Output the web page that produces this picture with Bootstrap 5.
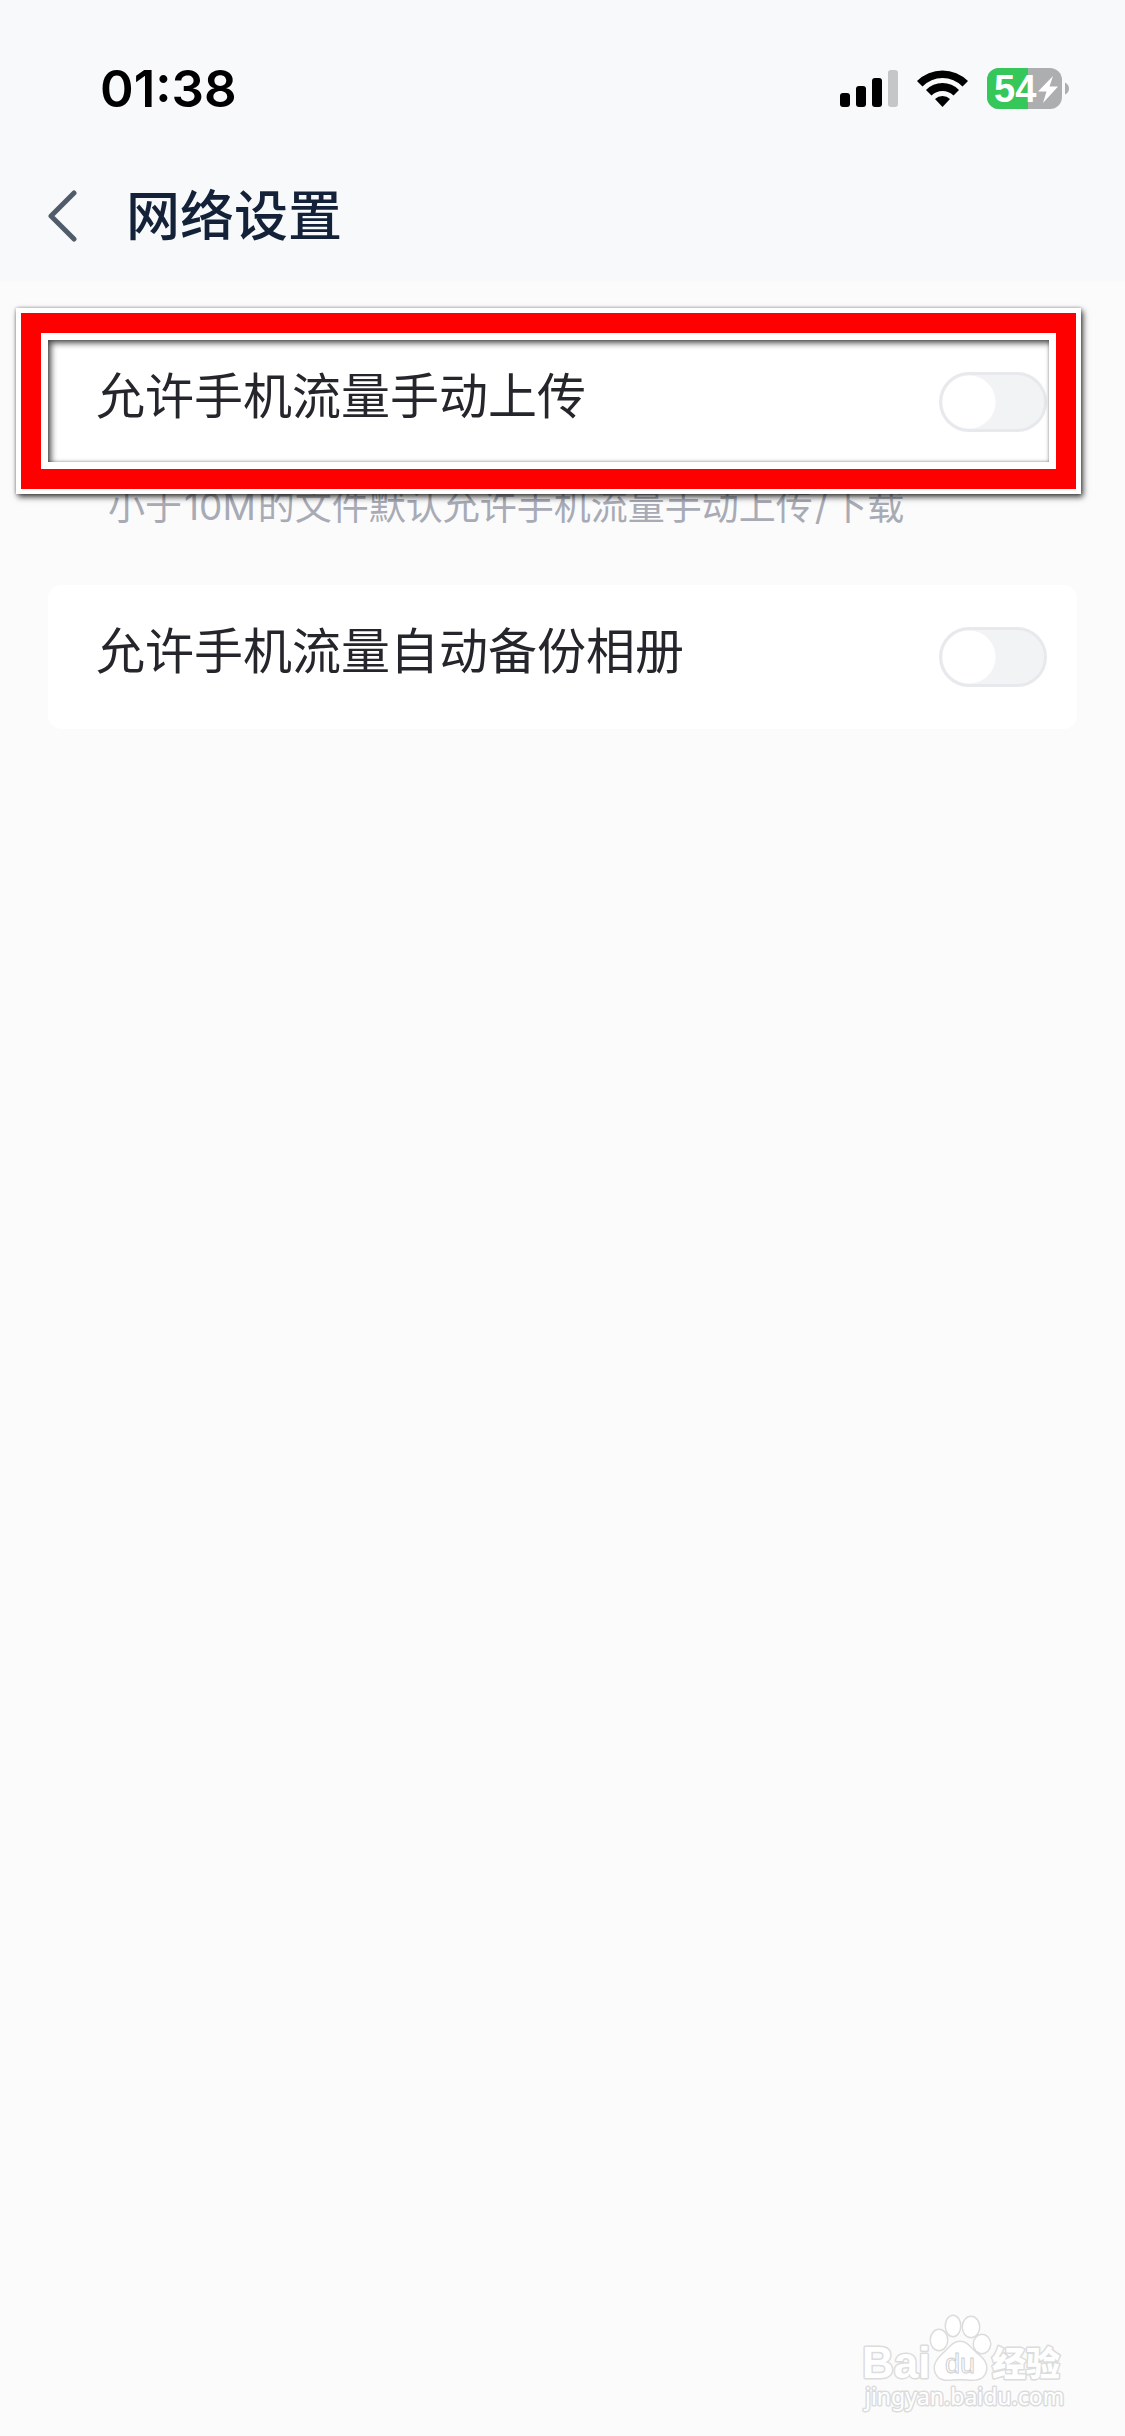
<!DOCTYPE html>
<html lang="zh-CN">
<head>
<meta charset="utf-8">
<meta name="viewport" content="width=device-width, initial-scale=1">
<title>网络设置</title>
<link href="https://cdn.jsdelivr.net/npm/bootstrap@5.3.0/dist/css/bootstrap.min.css" rel="stylesheet">
<style>
  body { background: #fbfbfb; color: #25262b; font-family: Inter, "Noto Sans CJK SC", sans-serif; }
  .top-area { background: #f8f9fb; }
  .status-row { padding: 28px 55px 0 100px; height: 150px; }
  .clock { font-size: 51px; line-height: 60px; font-weight: 600; color: #000; }
  .status-icons { gap: 19px; }
  .title-row { height: 132px; padding: 0 48px; gap: 48px; }
  .page-title { font-family: "Noto Sans CJK SC", sans-serif; font-size: 54px; line-height: 60px; font-weight: 500; color: #132238; padding-bottom: 6px; }
  .settings { padding: 48px 48px 0; }
  .setting { height: 144px; padding: 0 30px 0 48px; border: 0; border-radius: 14px; background: #fff; }
  .setting-name { font-family: "Noto Sans CJK SC", sans-serif; font-size: 49px; line-height: 60px; padding-bottom: 18px; }
  .form-switch .toggle { width: 108px; height: 60px; margin: 0; border: 3px solid #e8e9ed; background-color: #f2f3f5;
    background-image: radial-gradient(circle at 27px 50%, #fff 26px, transparent 27px); background-position: 0 0; background-size: 100% 100%; }
  .form-switch .toggle:checked { background-color: #2f6bff; background-image: radial-gradient(circle at 75px 50%, #fff 26px, transparent 27px); }
  .hint { font-size: 37px; line-height: 48px; color: #a8abb5; padding: 9px 60px 54px; }
  .latin { margin: 0 2px; }
  .callout-frame { top: -22px; right: -4px; bottom: -20px; left: -32px; z-index: 2; pointer-events: none; border: 5px solid #fff; box-shadow: 2px 3px 6px rgba(0,0,0,.75), 0 0 3px rgba(0,0,0,.3); }
  .callout-red { border: 20px solid #f00; }
  .callout-inner { border: 7px solid #fff; box-shadow: inset 3px 3px 6px rgba(0,0,0,.7), inset 0 0 3px rgba(0,0,0,.3); }
  .watermark { padding: 0 56px 20px 0; }
</style>
</head>
<body class="d-flex flex-column min-vh-100">
<header class="top-area">
  <div class="status-row d-flex align-items-center justify-content-between">
    <time class="clock">01:38</time>
    <div class="status-icons d-flex align-items-center">
      <svg width="58" height="38" viewBox="0 0 58 38" aria-hidden="true">
        <rect x="0" y="23" width="10" height="14" rx="3"/><rect x="16" y="16" width="10" height="21" rx="3"/><rect x="32" y="8" width="10" height="29" rx="3"/><rect x="48" y="0" width="10" height="37" rx="3" fill="#c5c6c8"/>
      </svg>
      <svg width="51" height="38" viewBox="0 0 51 38" aria-hidden="true">
        <path d="M0 11A36 36 0 0 1 51 11L45.500 16.500A28 28 0 0 0 5.500 16.500Z"/>
        <path d="M9 20A23 23 0 0 1 42 20L36.500 25.500A15.500 15.500 0 0 0 14.500 25.500Z"/>
        <path d="M18 29A11 11 0 0 1 33 29L25.500 37Z"/>
      </svg>
      <svg width="83" height="42" viewBox="0 0 83 42" role="img" aria-label="54%">
        <rect x="0" y="0" width="75" height="41" rx="12" fill="#adaeb0"/>
        <path d="M12 0H41V41H12A12 12 0 0 1 0 29V12A12 12 0 0 1 12 0Z" fill="#35c759"/>
        <path d="M78 14.500Q82 16.500 82 20.500T78 26.500Z" fill="#adaeb0"/>
        <text x="7" y="34" font-family="Liberation Sans, sans-serif" font-size="38" font-weight="700" fill="#fff">54</text>
        <path d="M66 8L51 23.500H59.500L56 35L71 18.500H62.500Z" fill="#fff"/>
      </svg>
    </div>
  </div>
  <div class="title-row d-flex align-items-center">
    <button type="button" class="btn p-0 border-0 d-flex" aria-label="返回">
      <svg width="30" height="54" viewBox="0 0 30 54"><path d="M26 4L3 27L26 50" fill="none" stroke="#515c6b" stroke-width="5" stroke-linecap="round" stroke-linejoin="round"/></svg>
    </button>
    <h1 class="page-title m-0">网络设置</h1>
  </div>
</header>
<main class="settings">
  <section class="setting card flex-row align-items-center justify-content-between">
    <label class="setting-name" for="manual">允许手机流量手动上传</label>
    <div class="form-check form-switch p-0 m-0 d-flex"><input class="form-check-input toggle" type="checkbox" role="switch" id="manual"></div>
    <div class="callout-frame position-absolute d-flex"><div class="callout-red flex-fill d-flex"><div class="callout-inner flex-fill"></div></div></div>
  </section>
  <p class="hint m-0">小于<span class="latin">10M</span>的文件默认允许手机流量手动上传<span class="latin">/</span>下载</p>
  <section class="setting card flex-row align-items-center justify-content-between">
    <label class="setting-name" for="album">允许手机流量自动备份相册</label>
    <div class="form-check form-switch p-0 m-0 d-flex"><input class="form-check-input toggle" type="checkbox" role="switch" id="album"></div>
  </section>
</main>
<footer class="watermark mt-auto d-flex justify-content-end">
  <svg width="208" height="104" viewBox="0 0 208 104" role="img" aria-label="Baidu 经验">
    <g fill="#fff" stroke="#dcdcdc" stroke-width="3" paint-order="stroke" stroke-linejoin="round">
      <text x="1" y="66" font-family="Liberation Sans, sans-serif" font-size="44" font-weight="700">Bai</text>
      <ellipse cx="78" cy="28" rx="8" ry="10"/><ellipse cx="92" cy="14" rx="7" ry="10"/><ellipse cx="110" cy="15" rx="8" ry="10"/><ellipse cx="121" cy="32" rx="8" ry="9"/>
      <path d="M99 30C106 30 109 36 116 42C124 48 127 54 124 61C120 70 110 67 99 67S79 70 75 61C72 53 76 48 82 42C89 36 92 30 99 30Z"/>
      <text x="131" y="64" font-family="Noto Sans CJK SC, sans-serif" font-size="34" font-weight="900">经验</text>
      <text x="4" y="93" font-family="Noto Sans, sans-serif" font-size="23">jingyan.baidu.com</text>
    </g>
    <text x="84" y="61" font-family="Liberation Sans, sans-serif" font-size="27" fill="#fff" stroke="#d0d0d0" stroke-width="1">du</text>
  </svg>
</footer>
<script src="https://cdn.jsdelivr.net/npm/bootstrap@5.3.0/dist/js/bootstrap.bundle.min.js"></script>
</body>
</html>
